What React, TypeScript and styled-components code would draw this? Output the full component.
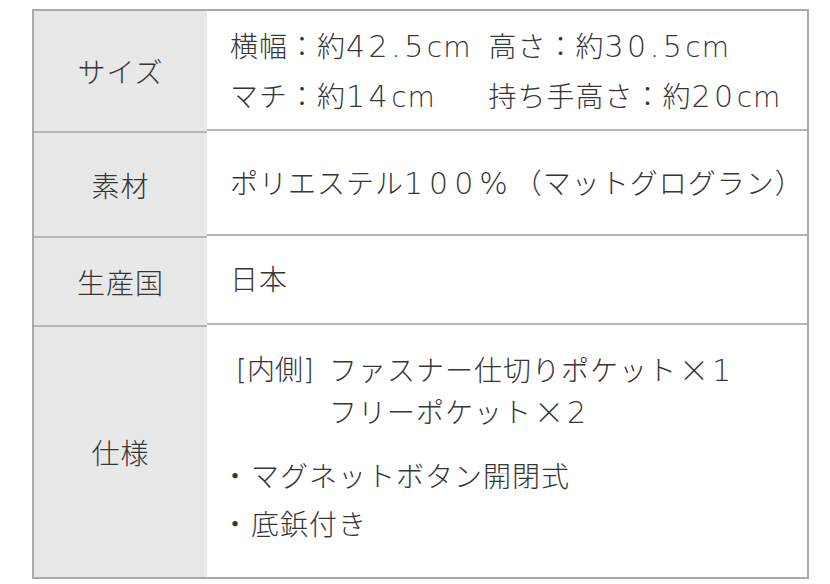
import React from "react";
import styled, { createGlobalStyle } from "styled-components";

const Global = createGlobalStyle`
  html, body { margin: 0; padding: 0; background: #ffffff; }
  body {
    font-family: "DejaVu Sans", "Noto Sans CJK JP", sans-serif;
    font-weight: 300;
    color: #363636;
  }
`;

const Page = styled.div`
  width: 830px;
  height: 584px;
  padding: 9px 0 0 32px;
  box-sizing: border-box;
`;

const Table = styled.div`
  width: 777px;
  border: 2px solid #aaaaaa;
  box-sizing: border-box;
  display: grid;
  grid-template-columns: 173px 1fr;
  font-size: 28px;
  letter-spacing: 1px;
`;

const Label = styled.div<{ $h: number; $last?: boolean }>`
  height: ${(p) => p.$h}px;
  background: #e8e8e8;
  display: flex;
  align-items: center;
  justify-content: center;
  border-bottom: ${(p) => (p.$last ? "none" : "2px solid #b5b5b5")};
`;

const Value = styled.div<{ $h: number; $last?: boolean; $pb?: number }>`
  height: ${(p) => p.$h}px;
  box-sizing: border-box;
  display: flex;
  flex-direction: column;
  justify-content: center;
  padding: 0 0 ${(p) => p.$pb ?? 0}px 23px;
  border-bottom: ${(p) => (p.$last ? "none" : "2px solid #b5b5b5")};
`;

const SizeGrid = styled.div`
  display: grid;
  grid-template-columns: auto auto;
  grid-auto-rows: 50px;
  justify-content: start;
  column-gap: 17px;
  line-height: 50px;
  padding-top: 4px;
  white-space: nowrap;
`;

const Num = styled.span<{ $sp?: number }>`
  font-size: 30px;
  letter-spacing: ${(p) => p.$sp ?? 3.5}px;
`;

const Sign = styled.span`
  font-family: "Noto Sans CJK JP", sans-serif;
  font-size: 30px;
  line-height: 1;
  margin: 0 2px;
`;

const Line = styled.div<{ $lh?: number }>`
  height: ${(p) => p.$lh ?? 40}px;
  line-height: ${(p) => p.$lh ?? 40}px;
  white-space: nowrap;
`;

const SpecGrid = styled.div`
  display: grid;
  grid-template-columns: 93px auto;
  grid-auto-rows: 42px;
  justify-content: start;
  padding-left: 6px;
  line-height: 42px;
  margin-bottom: 20px;
  white-space: nowrap;
`;

const Tag = styled.span`
  letter-spacing: 0;
`;

const Bullets = styled.div`
  line-height: 48px;
`;

const Dot = styled.span`
  display: inline-block;
  margin: 0 1px 0 -9px;
`;

export default function App() {
  return (
    <>
      <Global />
      <Page>
        <Table>
          <Label $h={120}>サイズ</Label>
          <Value $h={120}>
            <SizeGrid>
              <span>
                横幅：約<Num>42.5</Num>cm
              </span>
              <span>
                高さ：約<Num>30.5</Num>cm
              </span>
              <span>
                マチ：約<Num>14</Num>cm
              </span>
              <span>
                持ち手高さ：約<Num>20</Num>cm
              </span>
            </SizeGrid>
          </Value>

          <Label $h={103}>素材</Label>
          <Value $h={103}>
            <Line>
              ポリエステル<Num $sp={6}>100%</Num>（マットグログラン）
            </Line>
          </Value>

          <Label $h={87}>生産国</Label>
          <Value $h={87}>
            <Line>日本</Line>
          </Value>

          <Label $h={250} $last>
            仕様
          </Label>
          <Value $h={250} $last $pb={4}>
            <SpecGrid>
              <Tag>[内側]</Tag>
              <span>
                ファスナー仕切りポケット<Sign>×</Sign>
                <Num $sp={2.5}>1</Num>
              </span>
              <span />
              <span>
                フリーポケット<Sign>×</Sign>
                <Num $sp={2.5}>2</Num>
              </span>
            </SpecGrid>
            <Bullets>
              <Line $lh={48}>
                <Dot>・</Dot>マグネットボタン開閉式
              </Line>
              <Line $lh={48}>
                <Dot>・</Dot>底鋲付き
              </Line>
            </Bullets>
          </Value>
        </Table>
      </Page>
    </>
  );
}
